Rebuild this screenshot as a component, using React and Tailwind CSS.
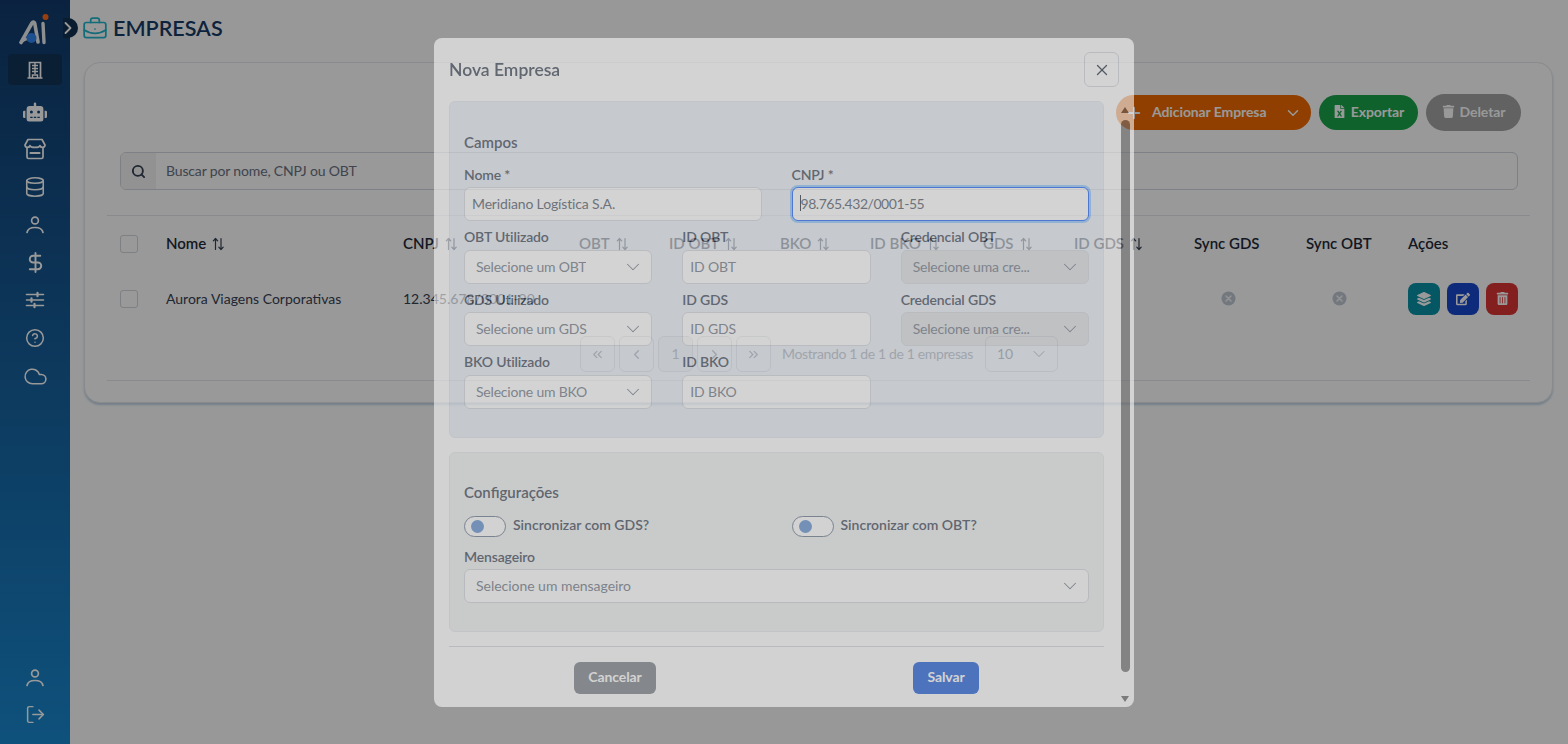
import React from 'react';
import { ChevronDown, ChevronRight, ChevronLeft, ChevronsLeft, ChevronsRight, X, Search, Database, DollarSign, CircleHelp, Cloud, LogOut, BriefcaseBusiness, Plus } from 'lucide-react';
import { FaRobot, FaFileExcel, FaTrash, FaLayerGroup, FaEdit, FaTrashAlt } from 'react-icons/fa';

const font = { fontFamily: 'Lato, "Noto Sans", sans-serif' };

function Sort() {
  return (
    <svg width="13" height="14" viewBox="0 0 13 14" fill="none" stroke="currentColor" strokeWidth="1.2" strokeLinecap="round" strokeLinejoin="round" className="shrink-0">
      <path d="M3.500 12.500V1.500M1.300 3.800 3.500 1.500 5.700 3.800" />
      <path d="M9 1.500v11M6.800 10.200 9 12.500l2.200-2.300" />
    </svg>
  );
}

function UserIcon() {
  return (
    <svg width="20" height="20" viewBox="0 0 20 20" fill="none" stroke="currentColor" strokeWidth="1.7" strokeLinecap="round">
      <circle cx="10" cy="5.500" r="3.400" />
      <path d="M2 17.500c.6-3.500 3.500-5 8-5s7.400 1.500 8 5" />
    </svg>
  );
}

function Building() {
  return (
    <svg width="20" height="20" viewBox="0 0 20 20" fill="none" stroke="currentColor" strokeWidth="1.700">
      <path d="M4.500 18V2.500h11V18M2.500 18h15" />
      <path d="M7 5.500h6M7 8.500h6M7 11.500h6M10 3v11M7.500 18v-3h5v3" strokeWidth="1.400" />
    </svg>
  );
}

function StoreIcon() {
  return (
    <svg width="24" height="22" viewBox="0 0 24 22" fill="none" stroke="currentColor" strokeWidth="1.700" strokeLinejoin="round" strokeLinecap="round">
      <path d="M5 1.500h14l3 5.500c0 3-4.500 3-5 .5-.5 2.500-9.500 2.500-10 0-.5 2.500-5 2.500-5-.5z" />
      <path d="M4 10.500V19a1.500 1.500 0 0 0 1.500 1.500h13A1.500 1.500 0 0 0 20 19v-8.500" />
      <path d="M7.500 15h9" strokeWidth="2.200" />
    </svg>
  );
}

function Sliders() {
  return (
    <svg width="20" height="20" viewBox="0 0 20 20" fill="none" stroke="currentColor" strokeWidth="1.600" strokeLinecap="round">
      <path d="M1.500 4.500h17M1.500 10h17M1.500 15.500h17" />
      <path d="M12.500 2.800v3.400M6.500 8.300v3.400M9.500 13.800v3.400" strokeWidth="2.200" />
    </svg>
  );
}

function Logo() {
  return (
    <svg width="36" height="36" viewBox="0 0 36 36" fill="none" className="shrink-0">
      <path d="M4 30.500 15 11c.9-1.600 2.400-1.300 2.800.5L21 30" stroke="#eceef0" strokeWidth="3.600" strokeLinecap="round" strokeLinejoin="round" />
      <path d="M4 30.500c3-3 6-4 9-4" stroke="#eceef0" strokeWidth="2.600" strokeLinecap="round" />
      <path d="M26 11.500 27 30.500" stroke="#eceef0" strokeWidth="3.400" strokeLinecap="round" />
      <circle cx="14.500" cy="26" r="5" fill="#2f86f0" />
      <circle cx="28.500" cy="5" r="3" fill="#ff6a1a" />
    </svg>
  );
}

function NavItem({ children, active }) {
  return (
    <div className={`mx-2 flex h-[31px] items-center justify-center rounded-sm text-white ${active ? 'bg-[#113558]' : ''}`}>
      {children}
    </div>
  );
}

function PageBtn({ children, active }) {
  return (
    <div className={`flex h-[36px] w-[35px] items-center justify-center rounded-md border border-gray-300 text-gray-500 ${active ? 'bg-gray-100' : 'bg-white'}`}>
      {children}
    </div>
  );
}

function HeaderCell({ label, sort }) {
  return (
    <div className="flex items-center gap-[6px] text-[15px] font-semibold text-gray-800">
      <span className="whitespace-nowrap">{label}</span>
      {sort && <span className="text-gray-700"><Sort /></span>}
    </div>
  );
}

function Circlex() {
  return (
    <svg width="15" height="15" viewBox="0 0 15 15">
      <circle cx="7.500" cy="7.500" r="7" fill="#c0c8d2" />
      <path d="M5 5l5 5M10 5l-5 5" stroke="#f4f5f7" strokeWidth="1.600" strokeLinecap="round" />
    </svg>
  );
}

function Field({ label, children }) {
  return (
    <div className="min-w-0">
      <div className="mb-[2.500px] h-5 whitespace-nowrap text-sm font-semibold leading-5 tracking-[-0.15px] text-gray-700">{label}</div>
      {children}
    </div>
  );
}

function TextInput({ placeholder, value, up }) {
  return (
    <input readOnly placeholder={placeholder} value={value ?? ''} className={`block h-[34px] w-full rounded-md border border-gray-300 bg-white px-[7px] text-sm tracking-[-0.15px] text-gray-600 outline-none placeholder:text-gray-500 ${up ? 'pb-[2px]' : ''}`} style={font} />
  );
}

function SelectBox({ placeholder, disabled, narrow, wide }) {
  return (
    <div className={`flex h-[34px] items-center justify-between rounded-md border border-gray-300 pl-[11px] pr-[7px] text-sm text-gray-500 ${wide ? 'tracking-[-0.03px]' : 'tracking-[-0.2px]'} ${disabled ? 'bg-[#dcdfe3]' : 'bg-white'}`}>
      <span className={narrow ? 'w-[124px] overflow-hidden whitespace-nowrap' : 'truncate'}>{placeholder}</span>
      <ChevronDown size={22} strokeWidth={1.100} className="shrink-0 text-gray-500" />
    </div>
  );
}

function Toggle({ label }) {
  return (
    <div className="flex items-center gap-[7px]">
      <div className="flex h-[21px] w-[42px] items-center rounded-full border border-[#64748b] bg-white pl-[6px]">
        <div className="h-[13px] w-[13px] rounded-full bg-[#5b8cd0]" />
      </div>
      <span className="mb-[2px] text-sm font-semibold text-gray-700">{label}</span>
    </div>
  );
}

export default function App() {
  const cols = 'grid grid-cols-[46px_237px_176px_90px_111px_90px_113px_91px_120px_112px_102px_110px] items-center';
  return (
    <div className="relative flex h-[744px] w-[1568px] overflow-hidden bg-[#fdfdfd]" style={font}>
      <aside className="relative flex w-[70px] shrink-0 flex-col bg-gradient-to-b from-[#113a6b] to-[#1888cf] pb-[14px] pt-[12px]">
        <div className="mb-[6px] flex justify-center"><Logo /></div>
        <div className="absolute left-[63px] top-[18px] flex h-5 w-[15px] items-center justify-start rounded-r-full bg-[#0f2f50] text-white">
          <ChevronRight size={20} strokeWidth={2.200} className="ml-[-5px]" />
        </div>
        <NavItem active><Building /></NavItem>
        <div className="mt-[11px] flex flex-col gap-[6.800px]">
          <NavItem><FaRobot size={24} /></NavItem>
          <NavItem><StoreIcon /></NavItem>
          <NavItem><Database size={22} strokeWidth={1.700} /></NavItem>
          <NavItem><UserIcon /></NavItem>
          <NavItem><DollarSign size={23} strokeWidth={2} /></NavItem>
          <NavItem><Sliders /></NavItem>
          <NavItem><CircleHelp size={20} strokeWidth={1.800} /></NavItem>
          <NavItem><Cloud size={25} strokeWidth={1.500} /></NavItem>
        </div>
        <div className="mt-auto flex flex-col gap-[6px]">
          <NavItem><UserIcon /></NavItem>
          <NavItem><LogOut size={21} strokeWidth={1.700} /></NavItem>
        </div>
      </aside>

      <main className="min-w-0 flex-1 pl-[14px] pr-[15px]">
        <div className="flex h-[62px] items-start pt-[15px]">
          <BriefcaseBusiness size={26} strokeWidth={1.600} className="ml-[-2px] mt-[1px] text-[#1fb5cc]" />
          <h1 className="ml-[5px] text-[21.500px] font-semibold leading-[27px] text-[#163a64]">EMPRESAS</h1>
        </div>
        <section className="h-[341px] rounded-[16px] border border-gray-200 bg-white shadow-[0_2px_2px_rgba(60,120,180,0.3)]">
          <div className="flex h-[89px] items-start justify-end gap-2 pr-[31px] pt-[32px]">
            <div className="flex h-[35px] w-[195px] items-center rounded-full bg-[#f06a00] pl-[9px] pr-[9px] text-sm font-bold text-white">
              <Plus size={18} strokeWidth={2.500} />
              <span className="ml-[9px] flex-1 pb-[2px] tracking-[-0.1px]">Adicionar Empresa</span>
              <ChevronDown size={18} />
            </div>
            <div className="flex h-[35px] w-[99px] items-center justify-center gap-[5px] rounded-full bg-[#1aa34a] pb-[2px] text-sm font-bold tracking-[-0.1px] text-white">
              <FaFileExcel size={13} /> Exportar
            </div>
            <div className="-mt-px flex h-[37px] w-[95px] items-center justify-center gap-[5px] rounded-full bg-[#a3a3a3] pb-[2px] text-sm font-bold tracking-[-0.1px] text-white">
              <FaTrash size={13} /> Deletar
            </div>
          </div>
          <div className="ml-[35px] mr-[34px] flex h-[38px] items-center overflow-hidden rounded-md border border-gray-300 text-sm text-gray-500">
            <div className="flex h-full w-[35px] items-center justify-center bg-gray-100 text-gray-700"><Search size={15} strokeWidth={3} /></div>
            <span className="ml-[10px] tracking-[-0.15px]">Buscar por nome, CNPJ ou OBT</span>
          </div>
          <div className="mx-[22px] mt-[25px] border-t border-gray-200">
            <div className={`${cols} ml-[13px] h-[55px]`}>
              <div className="h-[18px] w-[18px] rounded-[3px] border border-gray-300 bg-white" />
              <HeaderCell label="Nome" sort />
              <HeaderCell label="CNPJ" sort />
              <HeaderCell label="OBT" sort />
              <HeaderCell label="ID OBT" sort />
              <HeaderCell label="BKO" sort />
              <HeaderCell label="ID BKO" sort />
              <HeaderCell label="GDS" sort />
              <HeaderCell label="ID GDS" sort />
              <HeaderCell label="Sync GDS" />
              <HeaderCell label="Sync OBT" />
              <HeaderCell label="Ações" />
            </div>
            <div className={`${cols} ml-[13px] h-[55px] text-sm text-gray-700`}>
              <div className="h-[18px] w-[18px] rounded-[3px] border border-gray-300 bg-white" />
              <div>Aurora Viagens Corporativas</div>
              <div>12.345.678/0001-90</div>
              <div /><div /><div /><div /><div /><div />
              <div className="flex pl-[27px]"><Circlex /></div>
              <div className="flex pl-[25.500px]"><Circlex /></div>
              <div className="flex gap-[7px]">
                <div className="flex h-8 w-8 items-center justify-center rounded-lg bg-[#0891a5] text-white"><FaLayerGroup size={14} /></div>
                <div className="flex h-8 w-8 items-center justify-center rounded-lg bg-[#1748cc] text-white"><FaEdit size={14} /></div>
                <div className="flex h-8 w-8 items-center justify-center rounded-lg bg-[#dc3535] text-white"><FaTrashAlt size={13} /></div>
              </div>
            </div>
            <div className="flex h-[54px] items-start pl-[473px] pt-[10px]">
              <div className="flex gap-[4px]">
                <PageBtn><ChevronsLeft size={15} /></PageBtn>
                <PageBtn><ChevronLeft size={15} /></PageBtn>
                <PageBtn active><span className="text-sm">1</span></PageBtn>
                <PageBtn><ChevronRight size={15} /></PageBtn>
                <PageBtn><ChevronsRight size={15} /></PageBtn>
              </div>
              <span className="ml-[11px] mt-[8px] whitespace-nowrap text-sm tracking-[-0.36px] text-gray-500">Mostrando 1 de 1 de 1 empresas</span>
              <div className="ml-[12px] flex h-[36px] w-[73px] items-center justify-between rounded-md border border-gray-300 pl-[11px] pr-[8px] text-sm text-gray-600">
                10 <ChevronDown size={20} strokeWidth={1.200} />
              </div>
            </div>
            <div className="border-t border-gray-200" />
          </div>
        </section>
      </main>

      <div className="absolute inset-0 bg-black/40" />

      <div className="absolute left-[434px] top-[38px] flex h-[669px] w-[700px] flex-col rounded-lg bg-white px-[15px] opacity-[0.57]">
        <div className="relative flex h-[63px] shrink-0 items-start justify-between pt-[14px]">
          <h2 className="mt-[6px] text-[17.500px] font-semibold leading-[24px] text-gray-700">Nova Empresa</h2>
          <div className="flex h-[35px] w-[35px] items-center justify-center rounded-md border border-gray-300 bg-white text-gray-800">
            <X size={18} strokeWidth={1.700} />
          </div>
        </div>
        <div className="w-[655px] flex-1">
          <div className="h-[337px] rounded-md border border-[#dfe6ef] bg-[#e8eef5] px-[14px] pt-[30px]">
            <h3 className="mb-[12.500px] h-5 text-[15px] font-semibold leading-5 text-gray-700">Campos</h3>
            <div className="grid grid-cols-2 gap-x-[30px]">
              <Field label="Nome *"><TextInput up value="Meridiano Logística S.A." /></Field>
              <Field label="CNPJ *">
                <div className="relative">
                  <input readOnly value="98.765.432/0001-55" className="block h-[34px] w-full rounded-md border border-blue-600 bg-white px-2 pb-[2px] text-sm tracking-[-0.45px] text-gray-600 outline-none ring-[2px] ring-blue-300" style={font} />
                  <span className="absolute left-[8px] top-[8px] h-[16px] w-px bg-gray-800" />
                </div>
              </Field>
            </div>
            <div className="mt-[6px] grid grid-cols-3 gap-x-[30px] gap-y-[6px]">
              <Field label="OBT Utilizado"><SelectBox placeholder="Selecione um OBT" /></Field>
              <Field label="ID OBT"><TextInput placeholder="ID OBT" /></Field>
              <Field label="Credencial OBT"><SelectBox disabled narrow placeholder="Selecione uma cre..." /></Field>
              <Field label="GDS Utilizado"><SelectBox placeholder="Selecione um GDS" /></Field>
              <Field label="ID GDS"><TextInput up placeholder="ID GDS" /></Field>
              <Field label="Credencial GDS"><SelectBox disabled narrow placeholder="Selecione uma cre..." /></Field>
              <Field label="BKO Utilizado"><SelectBox placeholder="Selecione um BKO" /></Field>
              <Field label="ID BKO"><TextInput placeholder="ID BKO" /></Field>
            </div>
          </div>
          <div className="mt-[14px] h-[180px] rounded-md border border-gray-200 bg-[#eff1f1] px-[14px] pt-[29px]">
            <h3 className="mb-[13px] h-5 text-[15px] font-semibold leading-5 text-gray-700">Configurações</h3>
            <div className="grid grid-cols-2 gap-x-[30px]">
              <Toggle label="Sincronizar com GDS?" />
              <Toggle label="Sincronizar com OBT?" />
            </div>
            <div className="mb-[2px] mt-[10px] h-5 text-sm font-semibold leading-5 tracking-[-0.15px] text-gray-700">Mensageiro</div>
            <SelectBox wide placeholder="Selecione um mensageiro" />
          </div>
          <div className="mt-[14px] flex justify-center gap-[257px] border-t border-gray-300 pt-[15px]">
            <div className="flex h-[32px] w-[82px] items-center justify-center rounded-md bg-[#767c82] pb-[2px] text-sm font-bold tracking-[-0.1px] text-white">Cancelar</div>
            <div className="flex h-[32px] w-[66px] items-center justify-center rounded-md bg-[#1658da] pb-[2px] text-sm font-bold tracking-[-0.1px] text-white">Salvar</div>
          </div>
        </div>
        <div className="absolute bottom-0 right-[3px] top-[62px] flex w-[12px] flex-col items-center">
          <div className="mt-[7px] h-0 w-0 border-x-[4px] border-b-[6px] border-x-transparent border-b-[#666]" />
          <div className="mt-[7px] h-[552px] w-[9px] rounded-full bg-[#747474]" />
          <div className="mb-[5px] mt-auto h-0 w-0 border-x-[4px] border-t-[6px] border-x-transparent border-t-[#666]" />
        </div>
      </div>
    </div>
  );
}
